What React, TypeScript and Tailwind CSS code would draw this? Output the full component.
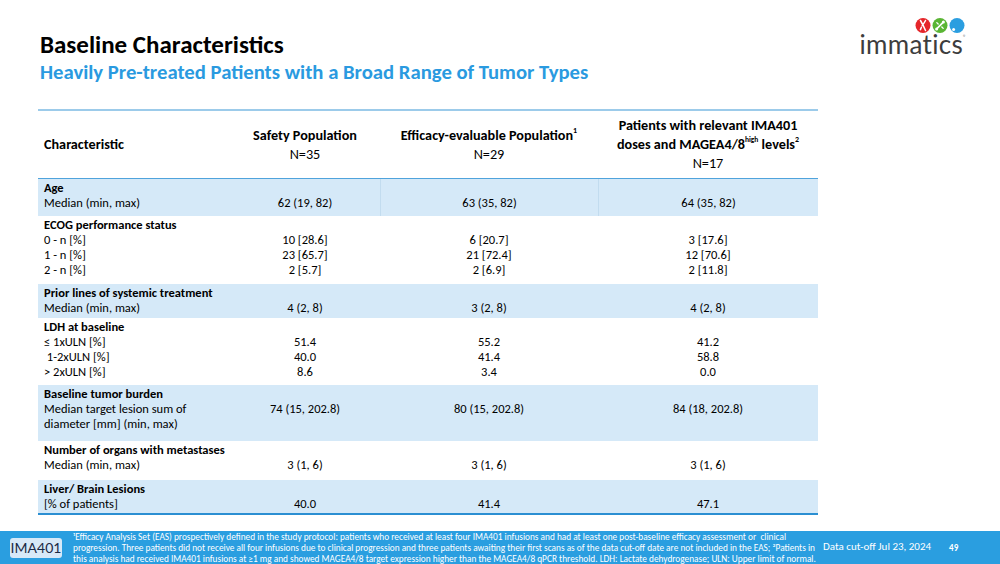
import React from 'react';

type Row = {
  title: string;
  labels: string[];
  vals: string[][];
  blue?: boolean;
  dividers?: boolean;
  h: string;
};

const rows: Row[] = [
  {
    title: 'Age',
    labels: ['Median (min, max)'],
    vals: [['62 (19, 82)'], ['63 (35, 82)'], ['64 (35, 82)']],
    blue: true,
    dividers: true,
    h: 'h-[37px]',
  },
  {
    title: 'ECOG performance status',
    labels: ['0 - n [%]', '1 - n [%]', '2 - n [%]'],
    vals: [
      ['10 [28.6]', '23 [65.7]', '2 [5.7]'],
      ['6 [20.7]', '21 [72.4]', '2 [6.9]'],
      ['3 [17.6]', '12 [70.6]', '2 [11.8]'],
    ],
    h: 'h-[68px]',
  },
  {
    title: 'Prior lines of systemic treatment',
    labels: ['Median (min, max)'],
    vals: [['4 (2, 8)'], ['3 (2, 8)'], ['4 (2, 8)']],
    blue: true,
    h: 'h-[34px]',
  },
  {
    title: 'LDH at baseline',
    labels: ['≤ 1xULN [%]', '\u00a01-2xULN [%]', '> 2xULN [%]'],
    vals: [
      ['51.4', '40.0', '8.6'],
      ['55.2', '41.4', '3.4'],
      ['41.2', '58.8', '0.0'],
    ],
    h: 'h-[67px]',
  },
  {
    title: 'Baseline tumor burden',
    labels: ['Median target lesion sum of', 'diameter [mm] (min, max)'],
    vals: [['74 (15, 202.8)'], ['80 (15, 202.8)'], ['84 (18, 202.8)']],
    blue: true,
    h: 'h-[56px]',
  },
  {
    title: 'Number of organs with metastases',
    labels: ['Median (min, max)'],
    vals: [['3 (1, 6)'], ['3 (1, 6)'], ['3 (1, 6)']],
    h: 'h-[39px]',
  },
  {
    title: 'Liver/ Brain Lesions',
    labels: ['[% of patients]'],
    vals: [['40.0'], ['41.4'], ['47.1']],
    blue: true,
    h: 'h-[33px]',
  },
];

const Logo = () => (
  <div className="flex flex-col items-end w-[112px]">
    <svg width="52" height="17" viewBox="0 0 52 17" className="mr-[-1px]">
      {/* red */}
      <circle cx="8" cy="8.5" r="7.5" fill="#e5262a" />
      <path d="M5.5 3.5 C7 6 9 10 10.5 13.5 M10.5 3.5 C9.5 5.5 8.5 7 7.2 8.6 M6.4 10.2 L5.4 12.6" stroke="#fff" strokeWidth="1.5" fill="none" strokeLinecap="round" />
      {/* green */}
      <circle cx="25" cy="8.5" r="7.5" fill="#5ab534" />
      <path d="M22.2 11.3 L27.8 5.7" stroke="#fff" strokeWidth="1.7" strokeLinecap="round" />
      <circle cx="21.6" cy="11.9" r="1.5" fill="#fff" />
      <circle cx="28.4" cy="5.1" r="1.5" fill="#fff" />
      <path d="M21.8 5.6 L23.2 7 M26.8 10 L28.2 11.4" stroke="#fff" strokeWidth="1.3" strokeLinecap="round" />
      {/* blue */}
      <circle cx="42" cy="8.5" r="7.5" fill="#2b9ee0" />
      <circle cx="38.6" cy="12.4" r="1.5" fill="#fff" />
    </svg>
    <div className="flex items-start -mt-[3px]">
      <span className="font-['Lato',sans-serif] text-[26px] leading-[26px] tracking-[0.3px] text-[#3d3d3d]">
        immatics
      </span>
      <span className="text-[6px] leading-[6px] text-[#3d3d3d] mt-[3px]">®</span>
    </div>
  </div>
);

export default function App() {
  return (
    <div className="w-[1000px] h-[564px] bg-white flex flex-col overflow-hidden font-['Carlito','Lato',sans-serif] text-black">
      {/* Header */}
      <div className="flex justify-between items-start pl-[40px] pr-[34px] pt-[31px] h-[109px]">
        <div>
          <h1 className="text-[25px] leading-[28px] font-bold text-black">Baseline Characteristics</h1>
          <h2 className="text-[20.7px] leading-[24px] font-bold text-[#2a9ae0] mt-[1px]">
            Heavily Pre-treated Patients with a Broad Range of Tumor Types
          </h2>
        </div>
        <div className="-mt-[14px]">
          <Logo />
        </div>
      </div>

      {/* Table */}
      <div className="ml-[38px] w-[780px]">
        <div className="grid grid-cols-[192px_150px_218px_220px] border-t-2 border-b-[1.5px] border-t-[#9ccbea] border-b-[#4fa3dc] h-[70px] text-[14.2px] leading-[19px]">
          <div className="flex items-center pl-[6px] font-bold">Characteristic</div>
          <div className="flex flex-col justify-center items-center text-center">
            <span className="font-bold">Safety Population</span>
            <span>N=35</span>
          </div>
          <div className="flex flex-col justify-center items-center text-center">
            <span className="font-bold">
              Efficacy-evaluable Population<sup className="text-[8px] align-[3px]">1</sup>
            </span>
            <span>N=29</span>
          </div>
          <div className="flex flex-col justify-center items-center text-center">
            <span className="font-bold whitespace-nowrap">Patients with relevant IMA401</span>
            <span className="font-bold whitespace-nowrap">
              doses and MAGEA4/8<sup className="text-[7.5px] align-[3px]">high</sup> levels
              <sup className="text-[8px] align-[3px]">2</sup>
            </span>
            <span>N=17</span>
          </div>
        </div>

        {rows.map((r) => (
          <div
            key={r.title}
            className={`grid grid-cols-[192px_150px_218px_220px] ${r.h} ${r.blue ? 'bg-[#d5e9f8]' : 'bg-white'} text-[12.5px] leading-[15px]`}
          >
            <div className="pl-[6px] pt-[1px]">
              <div className="font-bold whitespace-nowrap">{r.title}</div>
              {r.labels.map((l) => (
                <div key={l} className="whitespace-pre">{l}</div>
              ))}
            </div>
            {r.vals.map((col, i) => (
              <div
                key={i}
                className={`pt-[1px] text-center ${r.dividers && i > 0 ? 'border-l border-[#c2dcef]' : ''}`}
              >
                <div>&nbsp;</div>
                {col.map((v, j) => (
                  <div key={j}>{v}</div>
                ))}
              </div>
            ))}
          </div>
        ))}
        <div className="h-[1.5px] bg-[#2b8fd2]" />
      </div>

      {/* Footer */}
      <div className="mt-auto h-[33px] bg-[#2a9ee0] flex items-center text-white">
        <div className="ml-[10px] w-[52px] h-[20px] bg-[#d7e9f8] rounded-[3px] flex items-center justify-center text-[14px] text-[#1b2a45] font-['Lato',sans-serif]">
          IMA401
        </div>
        <div className="ml-[11px] text-[9.3px] leading-[11px] whitespace-nowrap w-[745px]">
          <div>
            ¹Efficacy Analysis Set (EAS) prospectively defined in the study protocol: patients who received at least four IMA401 infusions and had at least one post-baseline efficacy assessment or&nbsp; clinical
          </div>
          <div>
            progression. Three patients did not receive all four infusions due to clinical progression and three patients awaiting their first scans as of the data cut-off date are not included in the EAS; ²Patients in
          </div>
          <div>
            this analysis had received IMA401 infusions at ≥1 mg and showed MAGEA4/8 target expression higher than the MAGEA4/8 qPCR threshold. LDH: Lactate dehydrogenase; ULN: Upper limit of normal.
          </div>
        </div>
        <div className="ml-[5px] text-[11px] whitespace-nowrap">Data cut-off Jul 23, 2024</div>
        <div className="ml-[18px] text-[9px] font-bold">49</div>
      </div>
    </div>
  );
}
